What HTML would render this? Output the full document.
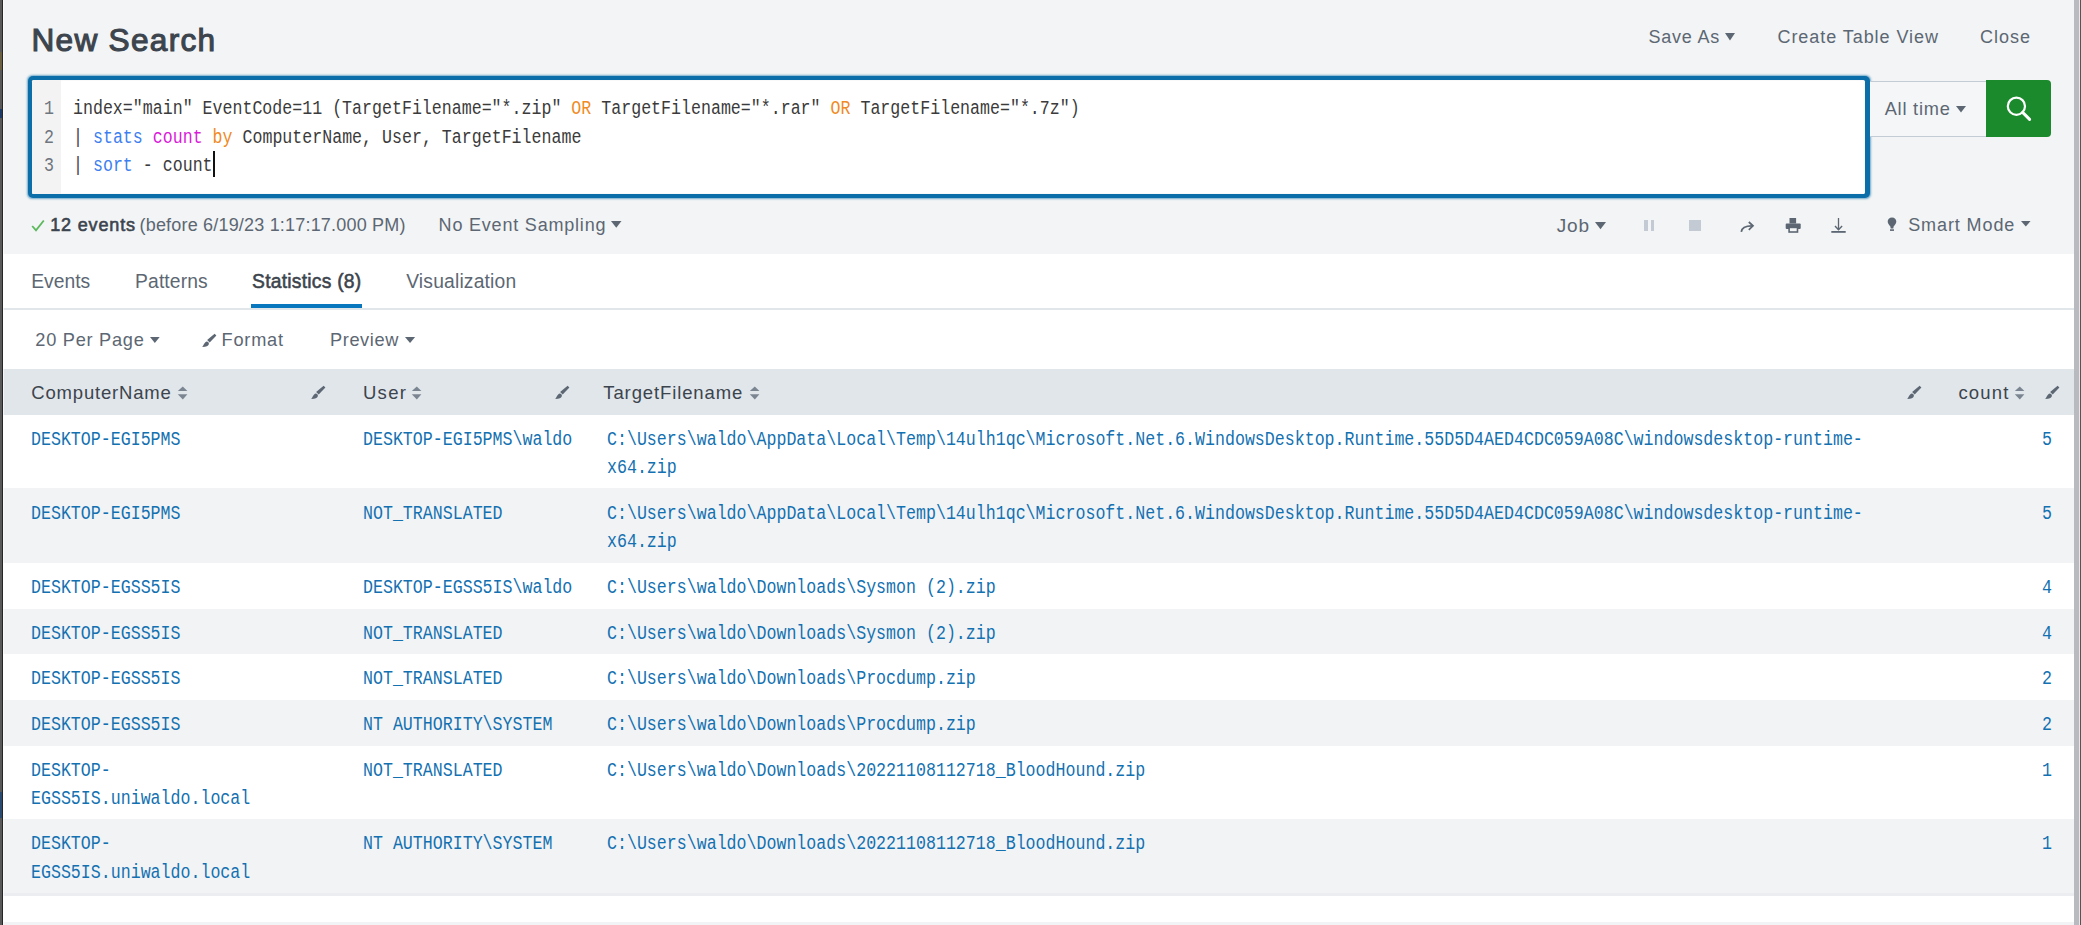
<!DOCTYPE html>
<html><head><meta charset="utf-8"><style>
html,body{margin:0;padding:0;width:2081px;height:925px;overflow:hidden;position:relative;background:#fff}
.t{position:absolute;white-space:pre;font-family:"Liberation Sans",sans-serif}
.m{position:absolute;white-space:pre;font-family:"Liberation Mono",monospace;transform-origin:0 0}
</style></head><body>
<div style="position:absolute;left:0.00px;top:0.00px;width:2081.00px;height:254.00px;background:#f2f4f5;"></div>
<div style="position:absolute;left:0.00px;top:254.00px;width:2081.00px;height:671.00px;background:#ffffff;"></div>
<div class="t" style="left:31.44px;top:24.74px;font-size:31.6px;line-height:31.6px;letter-spacing:1.291px;color:#3c444d;font-weight:400;-webkit-text-stroke:1.1px #3c444d;">New Search</div>
<div class="t" style="left:1648.40px;top:27.66px;font-size:18px;line-height:18px;letter-spacing:0.793px;color:#5c6773;font-weight:400;">Save As</div>
<svg style="position:absolute;left:1724.3px;top:31.799999999999997px" width="12.0" height="9.400000000000006" viewBox="0 0 12.0 9.400000000000006"><polygon points="1,1 11.0,1 6.0,8.400000000000006" fill="#5c6773"/></svg>
<div class="t" style="left:1777.50px;top:27.66px;font-size:18px;line-height:18px;letter-spacing:0.939px;color:#5c6773;font-weight:400;">Create Table View</div>
<div class="t" style="left:1980.00px;top:27.66px;font-size:18px;line-height:18px;letter-spacing:0.994px;color:#5c6773;font-weight:400;">Close</div>
<div style="position:absolute;left:28.00px;top:76.00px;width:1841.50px;height:122.00px;background:#0b6ea9;border-radius:5px;box-shadow:0 0 2px 0.5px rgba(11,110,169,0.55);"></div>
<div style="position:absolute;left:31.80px;top:80.00px;width:1833.50px;height:113.50px;background:#ffffff;border-radius:1.5px;box-shadow:inset 0 0 1px rgba(0,0,0,0.25);"></div>
<div style="position:absolute;left:31.80px;top:80.00px;width:29.70px;height:113.50px;background:#f3f3f3;border-radius:1.5px 0 0 1.5px;"></div>
<div class="m" style="left:43.80px;top:100.02px;font-size:19.3px;line-height:19.3px;transform:scaleX(0.8614)"><span style="color:#6f7680">1</span></div>
<div class="m" style="left:43.80px;top:128.52px;font-size:19.3px;line-height:19.3px;transform:scaleX(0.8614)"><span style="color:#6f7680">2</span></div>
<div class="m" style="left:43.80px;top:157.02px;font-size:19.3px;line-height:19.3px;transform:scaleX(0.8614)"><span style="color:#6f7680">3</span></div>
<div class="m" style="left:72.90px;top:100.02px;font-size:19.3px;line-height:19.3px;transform:scaleX(0.8614)"><span style="color:#3b3b3b">index="main" EventCode=11 (TargetFilename="*.zip" </span><span style="color:#f08a24">OR</span><span style="color:#3b3b3b"> TargetFilename="*.rar" </span><span style="color:#f08a24">OR</span><span style="color:#3b3b3b"> TargetFilename="*.7z")</span></div>
<div class="m" style="left:72.90px;top:128.52px;font-size:19.3px;line-height:19.3px;transform:scaleX(0.8614)"><span style="color:#4a3a4d">| </span><span style="color:#3d7ef0">stats</span><span style="color:#3b3b3b"> </span><span style="color:#d91ad9">count</span><span style="color:#3b3b3b"> </span><span style="color:#f08a24">by</span><span style="color:#3b3b3b"> ComputerName, User, TargetFilename</span></div>
<div class="m" style="left:72.90px;top:157.02px;font-size:19.3px;line-height:19.3px;transform:scaleX(0.8614)"><span style="color:#4a3a4d">| </span><span style="color:#3d7ef0">sort</span><span style="color:#3b3b3b"> - count</span></div>
<div style="position:absolute;left:212.80px;top:150.50px;width:2.00px;height:26.90px;background:#111111;"></div>
<div style="position:absolute;left:1869.50px;top:80.50px;width:116.50px;height:56.30px;background:#f5f6f8;border-top:1.5px solid #c3cbd4;border-bottom:1.5px solid #c3cbd4;box-sizing:border-box;"></div>
<div class="t" style="left:1884.70px;top:99.99px;font-size:18.2px;line-height:18.2px;letter-spacing:0.777px;color:#5c6773;font-weight:400;">All time</div>
<svg style="position:absolute;left:1955px;top:104.9px" width="12" height="8.5" viewBox="0 0 12 8.5"><polygon points="1,1 11,1 6.0,7.5" fill="#5c6773"/></svg>
<div style="position:absolute;left:1986.00px;top:80.20px;width:65.00px;height:56.60px;background:#1a8a2c;border-radius:0 4px 4px 0;"></div>
<svg style="position:absolute;left:2000px;top:90px" width="36" height="36" viewBox="0 0 36 36"><circle cx="16.4" cy="16.2" r="8.6" fill="none" stroke="#fff" stroke-width="2.2"/><line x1="22.6" y1="22.4" x2="29.6" y2="29.4" stroke="#fff" stroke-width="3" stroke-linecap="round"/></svg>
<svg style="position:absolute;left:30px;top:218px" width="16" height="15" viewBox="0 0 16 15"><polyline points="2.2,8 6,12.4 13.8,2.5" fill="none" stroke="#5cb85c" stroke-width="1.8"/></svg>
<div class="t" style="left:50.20px;top:215.76px;font-size:18px;line-height:18px;letter-spacing:0.844px;color:#3c444d;font-weight:400;-webkit-text-stroke:0.6px #3c444d;">12 events</div>
<div class="t" style="left:139.50px;top:215.76px;font-size:18px;line-height:18px;letter-spacing:0.191px;color:#5c6773;font-weight:400;">(before 6/19/23 1:17:17.000 PM)</div>
<div class="t" style="left:438.60px;top:215.76px;font-size:18px;line-height:18px;letter-spacing:0.801px;color:#5c6773;font-weight:400;">No Event Sampling</div>
<svg style="position:absolute;left:609.5px;top:220.3px" width="12.5" height="8.699999999999989" viewBox="0 0 12.5 8.699999999999989"><polygon points="1,1 11.5,1 6.25,7.699999999999989" fill="#5c6773"/></svg>
<div class="t" style="left:1556.72px;top:215.91px;font-size:19px;line-height:19px;letter-spacing:0.836px;color:#5c6773;font-weight:400;">Job</div>
<svg style="position:absolute;left:1593.7px;top:221.2px" width="13.0" height="9.300000000000011" viewBox="0 0 13.0 9.300000000000011"><polygon points="1,1 12.0,1 6.5,8.300000000000011" fill="#5c6773"/></svg>
<div style="position:absolute;left:1644.00px;top:219.70px;width:4.00px;height:11.40px;background:#c3cad4;"></div>
<div style="position:absolute;left:1650.90px;top:219.70px;width:3.20px;height:11.40px;background:#c3cad4;"></div>
<div style="position:absolute;left:1689.00px;top:219.70px;width:12.00px;height:11.40px;background:#c3cad4;"></div>
<svg style="position:absolute;left:1738px;top:219px" width="18" height="15" viewBox="0 0 18 15"><path d="M3.3,12.8 C3.8,8 7.5,6.8 14,6.8" fill="none" stroke="#5c6773" stroke-width="1.7"/><polyline points="10.8,3.0 15.0,6.8 10.8,10.8" fill="none" stroke="#5c6773" stroke-width="1.7"/></svg>
<svg style="position:absolute;left:1784px;top:217px" width="18" height="17" viewBox="0 0 18 17"><rect x="5.5" y="1" width="6.6" height="5.5" fill="#5c6773"/><rect x="1.7" y="6.5" width="15" height="5.4" rx="1" fill="#5c6773"/><rect x="5.1" y="10.4" width="8.4" height="4.6" fill="#f2f4f5" stroke="#5c6773" stroke-width="1.6"/></svg>
<svg style="position:absolute;left:1829px;top:216px" width="18" height="18" viewBox="0 0 18 18"><line x1="9.5" y1="2" x2="9.5" y2="14" stroke="#5c6773" stroke-width="1.3"/><polyline points="6.0,10.0 9.5,13.8 13.1,10.0" fill="none" stroke="#5c6773" stroke-width="1.4"/><line x1="2.3" y1="15.9" x2="16.7" y2="15.9" stroke="#5c6773" stroke-width="1.8"/></svg>
<svg style="position:absolute;left:1885px;top:215px" width="14" height="18" viewBox="0 0 14 18"><path d="M7,2.4 C9.6,2.4 11.3,4.3 11.3,6.6 C11.3,8.6 9.6,10.2 8.6,11.6 L8.3,13.6 L5.7,13.6 L5.4,11.6 C4.4,10.2 2.7,8.6 2.7,6.6 C2.7,4.3 4.4,2.4 7,2.4 Z" fill="#5c6773"/><rect x="5" y="14.3" width="4" height="1.6" fill="#5c6773"/></svg>
<div class="t" style="left:1908.20px;top:215.76px;font-size:18px;line-height:18px;letter-spacing:0.897px;color:#5c6773;font-weight:400;">Smart Mode</div>
<svg style="position:absolute;left:2019.6px;top:220.2px" width="11.600000000000136" height="7.600000000000023" viewBox="0 0 11.600000000000136 7.600000000000023"><polygon points="1,1 10.600000000000136,1 5.800000000000068,6.600000000000023" fill="#5c6773"/></svg>
<div class="t" style="left:31.20px;top:271.91px;font-size:19.3px;line-height:19.3px;letter-spacing:0.020px;color:#5c6773;font-weight:400;">Events</div>
<div class="t" style="left:135.05px;top:271.91px;font-size:19.3px;line-height:19.3px;letter-spacing:0.125px;color:#5c6773;font-weight:400;">Patterns</div>
<div class="t" style="left:252.05px;top:271.91px;font-size:19.3px;line-height:19.3px;letter-spacing:0.237px;color:#3c444d;font-weight:400;-webkit-text-stroke:0.55px #3c444d;">Statistics (8)</div>
<div class="t" style="left:406.20px;top:271.91px;font-size:19.3px;line-height:19.3px;letter-spacing:0.175px;color:#5c6773;font-weight:400;">Visualization</div>
<div style="position:absolute;left:3.00px;top:308.00px;width:2071.00px;height:1.50px;background:#e1e6eb;"></div>
<div style="position:absolute;left:250.75px;top:303.75px;width:111.25px;height:4.25px;background:#0877bd;"></div>
<div class="t" style="left:35.30px;top:330.79px;font-size:18.2px;line-height:18.2px;letter-spacing:0.741px;color:#5c6773;font-weight:400;">20 Per Page</div>
<svg style="position:absolute;left:149.1px;top:336.2px" width="11.700000000000017" height="8.0" viewBox="0 0 11.700000000000017 8.0"><polygon points="1,1 10.700000000000017,1 5.8500000000000085,7.0" fill="#5c6773"/></svg>
<svg style="position:absolute;left:200.5px;top:333px" width="16" height="15" viewBox="0 0 16 15"><polygon points="13.6,0.8 15.4,2.4 8.7,9.5 6.1,7.0" fill="#5c6773"/><path d="M5.6,8.6 C7.2,8.9 8.0,9.8 7.9,10.9 C7.6,12.8 5.2,13.9 1.3,13.9 C2.5,13.0 2.9,9.8 5.6,8.6 Z" fill="#5c6773"/></svg>
<div class="t" style="left:221.60px;top:330.79px;font-size:18.2px;line-height:18.2px;letter-spacing:0.772px;color:#5c6773;font-weight:400;">Format</div>
<div class="t" style="left:330.00px;top:330.79px;font-size:18.2px;line-height:18.2px;letter-spacing:0.601px;color:#5c6773;font-weight:400;">Preview</div>
<svg style="position:absolute;left:404.4px;top:336.2px" width="12.100000000000023" height="8.0" viewBox="0 0 12.100000000000023 8.0"><polygon points="1,1 11.100000000000023,1 6.050000000000011,7.0" fill="#5c6773"/></svg>
<div style="position:absolute;left:3.00px;top:369.30px;width:2071.00px;height:45.30px;background:#e1e6eb;"></div>
<div class="t" style="left:31.30px;top:383.74px;font-size:18.5px;line-height:18.5px;letter-spacing:0.812px;color:#3c444d;font-weight:400;">ComputerName</div>
<svg style="position:absolute;left:177.3px;top:385.5px" width="12" height="14" viewBox="0 0 12 14"><polygon points="0.8,5.0 5.8,0.4 10.4,5.0" fill="#7b8592"/><polygon points="0.8,8.3 5.8,13.4 10.4,8.3" fill="#7b8592"/></svg>
<svg style="position:absolute;left:310px;top:385px" width="16" height="15" viewBox="0 0 16 15"><polygon points="13.6,0.8 15.4,2.4 8.7,9.5 6.1,7.0" fill="#5c6773"/><path d="M5.6,8.6 C7.2,8.9 8.0,9.8 7.9,10.9 C7.6,12.8 5.2,13.9 1.3,13.9 C2.5,13.0 2.9,9.8 5.6,8.6 Z" fill="#5c6773"/></svg>
<div class="t" style="left:362.90px;top:383.74px;font-size:18.5px;line-height:18.5px;letter-spacing:1.316px;color:#3c444d;font-weight:400;">User</div>
<svg style="position:absolute;left:410.9px;top:385.5px" width="12" height="14" viewBox="0 0 12 14"><polygon points="0.8,5.0 5.8,0.4 10.4,5.0" fill="#7b8592"/><polygon points="0.8,8.3 5.8,13.4 10.4,8.3" fill="#7b8592"/></svg>
<svg style="position:absolute;left:553.8px;top:385px" width="16" height="15" viewBox="0 0 16 15"><polygon points="13.6,0.8 15.4,2.4 8.7,9.5 6.1,7.0" fill="#5c6773"/><path d="M5.6,8.6 C7.2,8.9 8.0,9.8 7.9,10.9 C7.6,12.8 5.2,13.9 1.3,13.9 C2.5,13.0 2.9,9.8 5.6,8.6 Z" fill="#5c6773"/></svg>
<div class="t" style="left:603.30px;top:383.74px;font-size:18.5px;line-height:18.5px;letter-spacing:0.877px;color:#3c444d;font-weight:400;">TargetFilename</div>
<svg style="position:absolute;left:748.7px;top:385.5px" width="12" height="14" viewBox="0 0 12 14"><polygon points="0.8,5.0 5.8,0.4 10.4,5.0" fill="#7b8592"/><polygon points="0.8,8.3 5.8,13.4 10.4,8.3" fill="#7b8592"/></svg>
<svg style="position:absolute;left:1905.5px;top:385px" width="16" height="15" viewBox="0 0 16 15"><polygon points="13.6,0.8 15.4,2.4 8.7,9.5 6.1,7.0" fill="#5c6773"/><path d="M5.6,8.6 C7.2,8.9 8.0,9.8 7.9,10.9 C7.6,12.8 5.2,13.9 1.3,13.9 C2.5,13.0 2.9,9.8 5.6,8.6 Z" fill="#5c6773"/></svg>
<div class="t" style="left:1958.40px;top:383.74px;font-size:18.5px;line-height:18.5px;letter-spacing:1.212px;color:#3c444d;font-weight:400;">count</div>
<svg style="position:absolute;left:2014.4px;top:385.5px" width="12" height="14" viewBox="0 0 12 14"><polygon points="0.8,5.0 5.8,0.4 10.4,5.0" fill="#7b8592"/><polygon points="0.8,8.3 5.8,13.4 10.4,8.3" fill="#7b8592"/></svg>
<svg style="position:absolute;left:2043.6px;top:385px" width="16" height="15" viewBox="0 0 16 15"><polygon points="13.6,0.8 15.4,2.4 8.7,9.5 6.1,7.0" fill="#5c6773"/><path d="M5.6,8.6 C7.2,8.9 8.0,9.8 7.9,10.9 C7.6,12.8 5.2,13.9 1.3,13.9 C2.5,13.0 2.9,9.8 5.6,8.6 Z" fill="#5c6773"/></svg>
<div style="position:absolute;left:3.00px;top:414.60px;width:2071.00px;height:73.80px;background:#ffffff;"></div>
<div class="m" style="left:31.00px;top:430.82px;font-size:19.3px;line-height:19.3px;transform:scaleX(0.8614)"><span style="color:#1371b1">DESKTOP-EGI5PMS</span></div>
<div class="m" style="left:363.00px;top:430.82px;font-size:19.3px;line-height:19.3px;transform:scaleX(0.8614)"><span style="color:#1371b1">DESKTOP-EGI5PMS\waldo</span></div>
<div class="m" style="left:607.00px;top:430.82px;font-size:19.3px;line-height:19.3px;transform:scaleX(0.8614)"><span style="color:#1371b1">C:\Users\waldo\AppData\Local\Temp\14ulh1qc\Microsoft.Net.6.WindowsDesktop.Runtime.55D5D4AED4CDC059A08C\windowsdesktop-runtime-</span></div>
<div class="m" style="left:607.00px;top:459.32px;font-size:19.3px;line-height:19.3px;transform:scaleX(0.8614)"><span style="color:#1371b1">x64.zip</span></div>
<div class="m" style="left:2041.80px;top:430.82px;font-size:19.3px;line-height:19.3px;transform:scaleX(0.8614)"><span style="color:#1371b1">5</span></div>
<div style="position:absolute;left:3.00px;top:488.40px;width:2071.00px;height:74.60px;background:#f2f3f5;"></div>
<div class="m" style="left:31.00px;top:504.62px;font-size:19.3px;line-height:19.3px;transform:scaleX(0.8614)"><span style="color:#1371b1">DESKTOP-EGI5PMS</span></div>
<div class="m" style="left:363.00px;top:504.62px;font-size:19.3px;line-height:19.3px;transform:scaleX(0.8614)"><span style="color:#1371b1">NOT_TRANSLATED</span></div>
<div class="m" style="left:607.00px;top:504.62px;font-size:19.3px;line-height:19.3px;transform:scaleX(0.8614)"><span style="color:#1371b1">C:\Users\waldo\AppData\Local\Temp\14ulh1qc\Microsoft.Net.6.WindowsDesktop.Runtime.55D5D4AED4CDC059A08C\windowsdesktop-runtime-</span></div>
<div class="m" style="left:607.00px;top:533.12px;font-size:19.3px;line-height:19.3px;transform:scaleX(0.8614)"><span style="color:#1371b1">x64.zip</span></div>
<div class="m" style="left:2041.80px;top:504.62px;font-size:19.3px;line-height:19.3px;transform:scaleX(0.8614)"><span style="color:#1371b1">5</span></div>
<div style="position:absolute;left:3.00px;top:563.00px;width:2071.00px;height:45.50px;background:#ffffff;"></div>
<div class="m" style="left:31.00px;top:579.22px;font-size:19.3px;line-height:19.3px;transform:scaleX(0.8614)"><span style="color:#1371b1">DESKTOP-EGSS5IS</span></div>
<div class="m" style="left:363.00px;top:579.22px;font-size:19.3px;line-height:19.3px;transform:scaleX(0.8614)"><span style="color:#1371b1">DESKTOP-EGSS5IS\waldo</span></div>
<div class="m" style="left:607.00px;top:579.22px;font-size:19.3px;line-height:19.3px;transform:scaleX(0.8614)"><span style="color:#1371b1">C:\Users\waldo\Downloads\Sysmon (2).zip</span></div>
<div class="m" style="left:2041.80px;top:579.22px;font-size:19.3px;line-height:19.3px;transform:scaleX(0.8614)"><span style="color:#1371b1">4</span></div>
<div style="position:absolute;left:3.00px;top:608.50px;width:2071.00px;height:45.20px;background:#f2f3f5;"></div>
<div class="m" style="left:31.00px;top:624.72px;font-size:19.3px;line-height:19.3px;transform:scaleX(0.8614)"><span style="color:#1371b1">DESKTOP-EGSS5IS</span></div>
<div class="m" style="left:363.00px;top:624.72px;font-size:19.3px;line-height:19.3px;transform:scaleX(0.8614)"><span style="color:#1371b1">NOT_TRANSLATED</span></div>
<div class="m" style="left:607.00px;top:624.72px;font-size:19.3px;line-height:19.3px;transform:scaleX(0.8614)"><span style="color:#1371b1">C:\Users\waldo\Downloads\Sysmon (2).zip</span></div>
<div class="m" style="left:2041.80px;top:624.72px;font-size:19.3px;line-height:19.3px;transform:scaleX(0.8614)"><span style="color:#1371b1">4</span></div>
<div style="position:absolute;left:3.00px;top:653.70px;width:2071.00px;height:46.00px;background:#ffffff;"></div>
<div class="m" style="left:31.00px;top:669.92px;font-size:19.3px;line-height:19.3px;transform:scaleX(0.8614)"><span style="color:#1371b1">DESKTOP-EGSS5IS</span></div>
<div class="m" style="left:363.00px;top:669.92px;font-size:19.3px;line-height:19.3px;transform:scaleX(0.8614)"><span style="color:#1371b1">NOT_TRANSLATED</span></div>
<div class="m" style="left:607.00px;top:669.92px;font-size:19.3px;line-height:19.3px;transform:scaleX(0.8614)"><span style="color:#1371b1">C:\Users\waldo\Downloads\Procdump.zip</span></div>
<div class="m" style="left:2041.80px;top:669.92px;font-size:19.3px;line-height:19.3px;transform:scaleX(0.8614)"><span style="color:#1371b1">2</span></div>
<div style="position:absolute;left:3.00px;top:699.70px;width:2071.00px;height:45.90px;background:#f2f3f5;"></div>
<div class="m" style="left:31.00px;top:715.92px;font-size:19.3px;line-height:19.3px;transform:scaleX(0.8614)"><span style="color:#1371b1">DESKTOP-EGSS5IS</span></div>
<div class="m" style="left:363.00px;top:715.92px;font-size:19.3px;line-height:19.3px;transform:scaleX(0.8614)"><span style="color:#1371b1">NT AUTHORITY\SYSTEM</span></div>
<div class="m" style="left:607.00px;top:715.92px;font-size:19.3px;line-height:19.3px;transform:scaleX(0.8614)"><span style="color:#1371b1">C:\Users\waldo\Downloads\Procdump.zip</span></div>
<div class="m" style="left:2041.80px;top:715.92px;font-size:19.3px;line-height:19.3px;transform:scaleX(0.8614)"><span style="color:#1371b1">2</span></div>
<div style="position:absolute;left:3.00px;top:745.60px;width:2071.00px;height:73.50px;background:#ffffff;"></div>
<div class="m" style="left:31.00px;top:761.82px;font-size:19.3px;line-height:19.3px;transform:scaleX(0.8614)"><span style="color:#1371b1">DESKTOP-</span></div>
<div class="m" style="left:31.00px;top:790.32px;font-size:19.3px;line-height:19.3px;transform:scaleX(0.8614)"><span style="color:#1371b1">EGSS5IS.uniwaldo.local</span></div>
<div class="m" style="left:363.00px;top:761.82px;font-size:19.3px;line-height:19.3px;transform:scaleX(0.8614)"><span style="color:#1371b1">NOT_TRANSLATED</span></div>
<div class="m" style="left:607.00px;top:761.82px;font-size:19.3px;line-height:19.3px;transform:scaleX(0.8614)"><span style="color:#1371b1">C:\Users\waldo\Downloads\20221108112718_BloodHound.zip</span></div>
<div class="m" style="left:2041.80px;top:761.82px;font-size:19.3px;line-height:19.3px;transform:scaleX(0.8614)"><span style="color:#1371b1">1</span></div>
<div style="position:absolute;left:3.00px;top:819.10px;width:2071.00px;height:74.10px;background:#f2f3f5;"></div>
<div class="m" style="left:31.00px;top:835.32px;font-size:19.3px;line-height:19.3px;transform:scaleX(0.8614)"><span style="color:#1371b1">DESKTOP-</span></div>
<div class="m" style="left:31.00px;top:863.82px;font-size:19.3px;line-height:19.3px;transform:scaleX(0.8614)"><span style="color:#1371b1">EGSS5IS.uniwaldo.local</span></div>
<div class="m" style="left:363.00px;top:835.32px;font-size:19.3px;line-height:19.3px;transform:scaleX(0.8614)"><span style="color:#1371b1">NT AUTHORITY\SYSTEM</span></div>
<div class="m" style="left:607.00px;top:835.32px;font-size:19.3px;line-height:19.3px;transform:scaleX(0.8614)"><span style="color:#1371b1">C:\Users\waldo\Downloads\20221108112718_BloodHound.zip</span></div>
<div class="m" style="left:2041.80px;top:835.32px;font-size:19.3px;line-height:19.3px;transform:scaleX(0.8614)"><span style="color:#1371b1">1</span></div>
<div style="position:absolute;left:3.00px;top:893.20px;width:2071.00px;height:2.40px;background:#ecedf1;"></div>
<div style="position:absolute;left:3.00px;top:922.00px;width:2071.00px;height:3.00px;background:#f2f3f5;"></div>
<div style="position:absolute;left:0.00px;top:0.00px;width:2.00px;height:925.00px;background:#595959;"></div>
<div style="position:absolute;left:2.00px;top:0.00px;width:1.00px;height:925.00px;background:#262626;"></div>
<div style="position:absolute;left:0.00px;top:51.70px;width:2.00px;height:18.00px;background:#6b6142;"></div>
<div style="position:absolute;left:0.00px;top:109.00px;width:1.50px;height:9.00px;background:#1d3a66;"></div>
<div style="position:absolute;left:0.00px;top:792.00px;width:2.00px;height:26.00px;background:#2a4a70;"></div>
<div style="position:absolute;left:3.00px;top:0.00px;width:1.00px;height:925.00px;background:rgba(255,255,255,0.6);"></div>
<div style="position:absolute;left:2074.00px;top:0.00px;width:5.00px;height:925.00px;background:#b9bac0;"></div>
<div style="position:absolute;left:2079.00px;top:0.00px;width:1.00px;height:925.00px;background:#e8e8ea;"></div>
<div style="position:absolute;left:2080.00px;top:0.00px;width:1.00px;height:925.00px;background:#555555;"></div>
</body></html>
